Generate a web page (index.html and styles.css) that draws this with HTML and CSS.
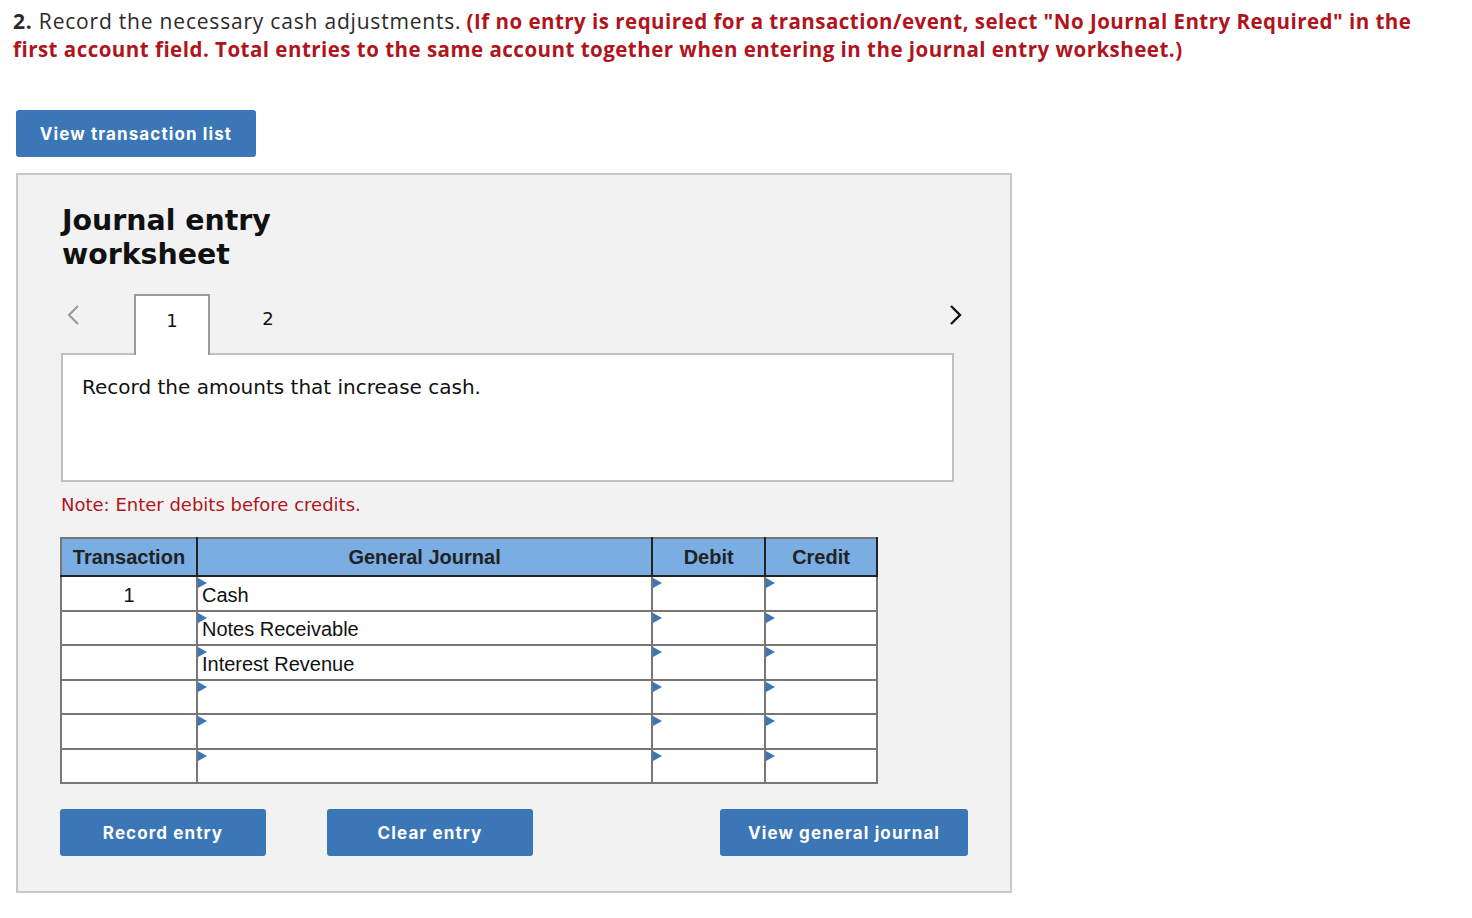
FILE: index.html
```html
<!DOCTYPE html>
<html>
<head>
<meta charset="utf-8">
<link rel="stylesheet" href="styles.css">
</head>
<body>
<p class="prompt"><span class="reg"><b>2.</b> Record the necessary cash adjustments.</span> <span class="red">(If no entry is required for a transaction/event, select "No Journal Entry Required" in the<br>first account field. Total entries to the same account together when entering in the journal entry worksheet.)</span></p>
<button class="btn btn-list">View transaction list</button>
<div class="panel">
  <h2 class="title">Journal entry<br>worksheet</h2>
  <div class="tabrow">
    <span class="chev chev-left"><svg width="14" height="22" viewBox="0 0 14 22"><path d="M12 2 L3 11 L12 20" fill="none" stroke="#9a9a9a" stroke-width="2.2"/></svg></span>
    <div class="tabs">
      <div class="tab active">1</div>
      <div class="tab">2</div>
    </div>
    <span class="chev chev-right"><svg width="14" height="22" viewBox="0 0 14 22"><path d="M2 2 L11 11 L2 20" fill="none" stroke="#111" stroke-width="2.4"/></svg></span>
  </div>
  <div class="desc">Record the amounts that increase cash.</div>
  <p class="note">Note: Enter debits before credits.</p>
  <table class="journal">
    <thead>
      <tr><th class="c-tr">Transaction</th><th class="c-gj">General Journal</th><th class="c-dr">Debit</th><th class="c-cr">Credit</th></tr>
    </thead>
    <tbody>
      <tr><td class="num">1</td><td class="mk">Cash</td><td class="mk"></td><td class="mk"></td></tr>
      <tr><td class="num"></td><td class="mk">Notes Receivable</td><td class="mk"></td><td class="mk"></td></tr>
      <tr><td class="num"></td><td class="mk">Interest Revenue</td><td class="mk"></td><td class="mk"></td></tr>
      <tr><td class="num"></td><td class="mk"></td><td class="mk"></td><td class="mk"></td></tr>
      <tr><td class="num"></td><td class="mk"></td><td class="mk"></td><td class="mk"></td></tr>
      <tr><td class="num"></td><td class="mk"></td><td class="mk"></td><td class="mk"></td></tr>
    </tbody>
  </table>
  <div class="actions">
    <button class="btn btn-rec">Record entry</button>
    <button class="btn btn-clr">Clear entry</button>
    <button class="btn btn-view">View general journal</button>
  </div>
</div>
</body>
</html>
```
FILE: styles.css
```css
html, body { margin: 0; padding: 0; background: #fff; }
body { font-family: "Liberation Sans", Arial, sans-serif; color: #222; }

.prompt {
  margin: 8px 0 0 13px;
  width: 1455px;
  font-family: "Open Sans", Lato, sans-serif;
  font-size: 20px;
  line-height: 28px;
  color: #2b2b2b;
}
.reg { font-size: 21px; letter-spacing: 0.8px; line-height: 20px; }
.prompt b { font-weight: 700; }
.red { color: #b0141c; font-weight: 700; font-size: 20.5px; letter-spacing: 0.48px; line-height: 20px; }

.btn {
  display: block;
  flex-shrink: 0;
  border: none;
  border-radius: 3px;
  background: #3b76b6;
  color: #fff;
  font-family: Inter, "DejaVu Sans", sans-serif;
  font-weight: 700;
  font-size: 17px;
  letter-spacing: 1.1px;
  height: 47px;
  padding: 0;
  cursor: pointer;
}
.btn-list { margin: 46px 0 0 16px; width: 240px; }

.panel {
  margin: 16px 0 0 16px;
  width: 949px;
  height: 716px;
  border: 2px solid #c8c8c8;
  background: #f2f2f2;
  padding: 0 0 0 43px;
  box-sizing: content-box;
}
.title {
  margin: 29px 0 0 1px;
  font-family: "DejaVu Sans", Verdana, sans-serif;
  font-weight: 700;
  font-size: 28.4px;
  line-height: 34px;
  color: #111;
}
.tabrow {
  display: flex;
  align-items: flex-end;
  width: 904px;
  height: 60px;
  margin-top: 22px;
}
.chev { align-self: flex-start; padding-top: 10px; }
.chev-left { margin-left: 5px; width: 68px; }
.chev-right { margin-left: auto; width: 16px; }
.tabs { display: flex; height: 60px; }
.tab {
  width: 76px;
  box-sizing: border-box;
  height: 60px;
  font-family: "DejaVu Sans", Verdana, sans-serif;
  font-size: 18px;
  color: #111;
  text-align: center;
  padding-top: 14px;
}
.tab.active {
  background: #fff;
  border: 2px solid #9a9a9a;
  border-bottom: none;
  position: relative;
  z-index: 1;
  height: 61px;
  margin-bottom: -1px;
}
.tab + .tab { width: 116px; }

.desc {
  box-sizing: border-box;
  width: 893px;
  height: 129px;
  margin-top: -1px;
  background: #fff;
  border: 2px solid #c0c0c0;
  padding: 20px 0 0 19px;
  font-family: "DejaVu Sans", Verdana, sans-serif;
  font-size: 20px;
  color: #111;
}
.note {
  margin: 12px 0 0 0;
  font-family: "DejaVu Sans", Verdana, sans-serif;
  font-size: 18px;
  color: #b0141c;
  line-height: 22px;
}

.journal {
  margin: 21px 0 0 -1px;
  width: 818px;
  border-collapse: collapse;
  background: #fff;
  font-family: "Liberation Sans", Arial, sans-serif;
}
.journal th {
  background: #7aade2;
  height: 36px;
  border: 2px solid #222;
  border-top-color: #777;
  font-size: 20px;
  font-weight: 700;
  color: #222;
  padding: 0;
}
.journal th:first-child { border-left-color: #777; }
.c-tr { width: 134px; }
.c-gj { width: 454px; }
.c-dr { width: 111px; }
.c-cr { width: 110px; }
.journal td {
  border: 2px solid #777;
  height: 34.5px;
  box-sizing: border-box;
  padding: 3px 0 0 4px;
  font-size: 20px;
  color: #111;
  vertical-align: middle;
  line-height: 22px;
  position: relative;
}
.journal td.num { text-align: center; padding-left: 0; }
.journal td.mk::before {
  content: "";
  position: absolute;
  left: 0;
  top: 1px;
  border-top: 5px solid transparent;
  border-bottom: 5px solid transparent;
  border-left: 9px solid #3b76b6;
}

.actions {
  display: flex;
  margin: 25px 0 0 -1px;
}
.btn-rec { width: 206px; }
.btn-clr { width: 206px; margin-left: 61px; }
.btn-view { width: 248px; margin-left: 187px; }
```
